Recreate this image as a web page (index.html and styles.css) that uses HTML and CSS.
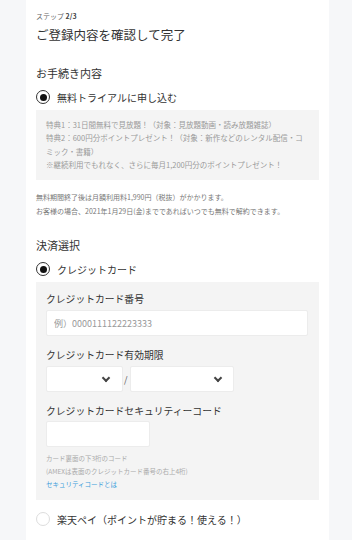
FILE: index.html
```html
<!DOCTYPE html>
<html lang="ja">
<head>
    <meta charset="UTF-8">
    <meta name="viewport" content="width=device-width, initial-scale=1.0">
    <title>ご登録内容を確認して完了</title>
    <link rel="stylesheet" href="styles.css">
</head>
<body>
    <div class="card">
        <div class="step">ステップ <b>2/3</b></div>
        <h1 class="title">ご登録内容を確認して完了</h1>

        <h2 class="section-label">お手続き内容</h2>
        <label class="radio-row">
            <span class="radio checked"></span>
            <span>無料トライアルに申し込む</span>
        </label>
        <div class="info-box">
            <p>特典1：31日間無料で見放題！（対象：見放題動画・読み放題雑誌）</p>
            <p>特典2：600円分ポイントプレゼント！（対象：新作などのレンタル配信・コミック・書籍）</p>
            <p>※継続利用でもれなく、さらに毎月1,200円分のポイントプレゼント！</p>
        </div>
        <div class="notes">
            <p>無料期間終了後は月額利用料1,990円（税抜）がかかります。</p>
            <p>お客様の場合、2021年1月29日(金)までであればいつでも無料で解約できます。</p>
        </div>

        <h2 class="section-label pay">決済選択</h2>
        <label class="radio-row">
            <span class="radio checked"></span>
            <span>クレジットカード</span>
        </label>
        <div class="card-box">
            <div class="field-label">クレジットカード番号</div>
            <input class="text-input number" type="text" placeholder="例）0000111122223333">

            <div class="field-label">クレジットカード有効期限</div>
            <div class="expiry">
                <div class="select month"><span class="chev"></span></div>
                <span class="slash">/</span>
                <div class="select year"><span class="chev"></span></div>
            </div>

            <div class="field-label">クレジットカードセキュリティーコード</div>
            <input class="text-input code" type="text">

            <div class="help">
                <p>カード裏面の下3桁のコード</p>
                <p>(AMEXは表面のクレジットカード番号の右上4桁)</p>
                <p><a href="#">セキュリティコードとは</a></p>
            </div>
        </div>

        <label class="radio-row rakuten">
            <span class="radio"></span>
            <span>楽天ペイ（ポイントが貯まる！使える！）</span>
        </label>
    </div>
</body>
</html>
```

FILE: styles.css
```css
body {
    margin: 0;
    background-color: #f6f7f9;
    font-family: "Noto Sans CJK JP", "Noto Sans", sans-serif;
    color: #333;
}

p {
    margin: 0;
}

.card {
    margin-left: 26px;
    width: 303px;
    min-height: 540px;
    box-sizing: border-box;
    padding: 10px 10px 0;
    background-color: #fff;
}

.step {
    font-size: 7px;
    line-height: 12px;
    color: #666;
}

.step b {
    color: #444;
}

.title {
    margin: 4px 0 0;
    font-size: 12.5px;
    line-height: 18px;
    font-weight: normal;
}

.section-label {
    margin: 21px 0 0;
    font-size: 11px;
    line-height: 16px;
    font-weight: normal;
}

.section-label.pay {
    margin-top: 19px;
}

.radio-row {
    display: flex;
    align-items: center;
    gap: 7px;
    margin-top: 8px;
    height: 16px;
    font-size: 10px;
}

.radio {
    width: 14px;
    height: 14px;
    box-sizing: border-box;
    border: 1px solid #ddd;
    border-radius: 50%;
    background: #fff;
    display: flex;
    align-items: center;
    justify-content: center;
}

.radio.checked {
    border: 1.5px solid #333;
}

.radio.checked::after {
    content: "";
    width: 7px;
    height: 7px;
    border-radius: 50%;
    background: #111;
}

.info-box {
    margin-top: 5px;
    padding: 8px 10px 9px;
    background-color: #f4f4f4;
    font-size: 7.5px;
    line-height: 13.3px;
    color: #9a9a9a;
}

.notes {
    margin-top: 10px;
    font-size: 7px;
    line-height: 14px;
    color: #777;
}

.card-box {
    margin-top: 5px;
    padding: 10px 10px 9px;
    background-color: #f4f4f4;
}

.field-label {
    font-size: 9.8px;
    line-height: 14px;
    margin-top: 12px;
}

.field-label:first-child {
    margin-top: 0;
}

.text-input {
    display: block;
    margin-top: 4px;
    height: 26px;
    box-sizing: border-box;
    border: 1px solid #ececec;
    border-radius: 2px;
    background: #fff;
    padding: 0 7px;
    font-family: inherit;
    font-size: 9px;
    color: #333;
    outline: none;
}

.text-input::placeholder {
    color: #999;
}

.number {
    width: 262px;
}

.code {
    width: 104px;
    margin-top: 3px;
}

.expiry {
    display: flex;
    align-items: center;
    margin-top: 4px;
}

.select {
    height: 26px;
    box-sizing: border-box;
    border: 1px solid #ececec;
    border-radius: 2px;
    background: #fff;
    display: flex;
    align-items: center;
    justify-content: flex-end;
}

.select.month {
    width: 77px;
    padding-right: 13px;
}

.select.year {
    width: 104px;
    padding-right: 12px;
}

.chev {
    width: 4px;
    height: 4px;
    border-right: 2px solid #444;
    border-bottom: 2px solid #444;
    transform: rotate(45deg);
    margin-top: -3px;
}

.slash {
    width: 6px;
    margin: 0 0 0 1px;
    font-size: 9px;
    color: #555;
}

.help {
    margin-top: 5px;
    font-size: 6.5px;
    line-height: 13px;
    color: #aaa;
}

.help a {
    color: #3c9ddb;
    text-decoration: none;
}

.radio-row.rakuten {
    margin-top: 11px;
}
```
